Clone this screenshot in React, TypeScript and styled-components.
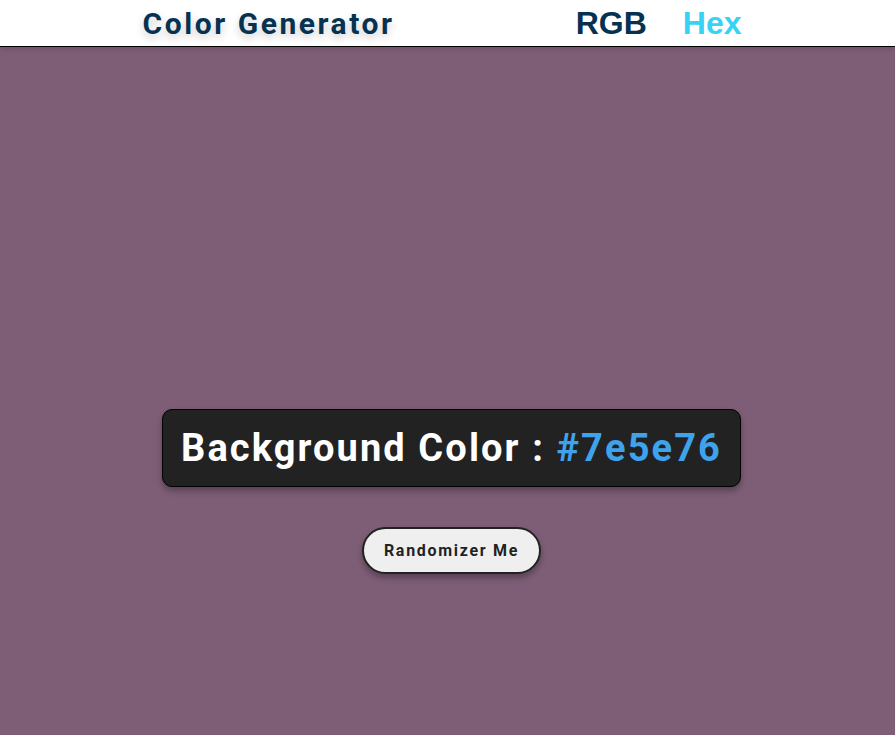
import React from "react";
import styled, { createGlobalStyle } from "styled-components";

const Global = createGlobalStyle`
  * { box-sizing: border-box; }
  html, body { margin: 0; padding: 0; }
  body {
    background: #7e5e76;
    font-family: Roboto, "Noto Sans", sans-serif;
    min-height: 100vh;
  }
`;

const Nav = styled.nav`
  background: #fff;
  border-bottom: 1px solid #000;
  height: 47px;
  box-shadow: 0 2px 6px rgba(0, 0, 0, 0.15);
`;

const NavCenter = styled.div`
  width: 620px;
  height: 100%;
  margin: 0 auto;
  padding: 0 16px 0 5px;
  display: flex;
  align-items: center;
  justify-content: space-between;
`;

const Title = styled.h4`
  margin: 0;
  font-size: 30px;
  font-weight: 700;
  color: #063251;
  letter-spacing: 2.55px;
  text-shadow: 0 4px 8px rgba(0, 0, 0, 0.2);
`;

const Links = styled.div`
  display: flex;
  gap: 36px;
`;

const NavLink = styled.a<{ $active?: boolean }>`
  font-family: "Liberation Sans", Arial, sans-serif;
  font-size: 32px;
  font-weight: 700;
  letter-spacing: 0;
  text-decoration: none;
  color: ${(p) => (p.$active ? "#36d3f5" : "#063251")};
  cursor: pointer;
`;

const Main = styled.main`
  display: flex;
  flex-direction: column;
  align-items: center;
  padding: 362px 0 0 8px;
`;

const Heading = styled.h2`
  margin: 0 0 40px;
  background: #222;
  color: #fff;
  font-size: 38px;
  font-weight: 700;
  letter-spacing: 2.1px;
  padding: 14px 18px;
  border: 1px solid #000;
  border-radius: 10px;
  box-shadow: 0 4px 6px rgba(0, 0, 0, 0.3);
  line-height: 48px;
`;

const Hex = styled.span`
  color: #3fa3ec;
`;

const Button = styled.button`
  font-family: Roboto, "Noto Sans", sans-serif;
  background: #efefef;
  color: #222;
  border: 2px solid #222;
  border-radius: 30px;
  padding: 0 20px;
  height: 47px;
  font-size: 16px;
  font-weight: 700;
  letter-spacing: 1.7px;
  box-shadow: 0 4px 6px rgba(0, 0, 0, 0.3);
  cursor: pointer;
`;

export default function App() {
  return (
    <>
      <Global />
      <Nav>
        <NavCenter>
          <Title>Color Generator</Title>
          <Links>
            <NavLink>RGB</NavLink>
            <NavLink $active>Hex</NavLink>
          </Links>
        </NavCenter>
      </Nav>
      <Main>
        <Heading>
          Background Color : <Hex>#7e5e76</Hex>
        </Heading>
        <Button>Randomizer Me</Button>
      </Main>
    </>
  );
}
